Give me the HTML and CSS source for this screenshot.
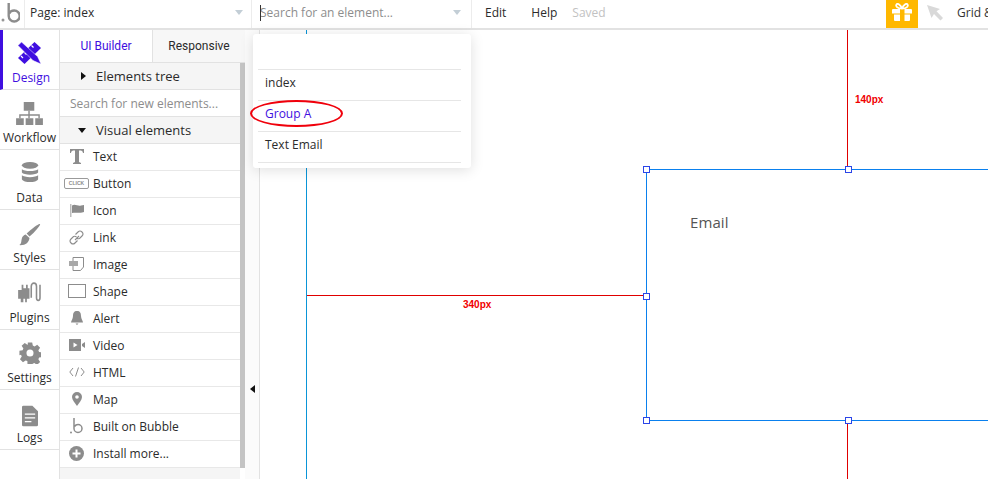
FILE: index.html
```html
<!DOCTYPE html>
<html lang="en">
<head>
<meta charset="utf-8">
<title>Bubble editor</title>
<link rel="stylesheet" href="styles.css">
</head>
<body>
<div class="app">
  <header class="topbar">
    <div class="logo-cell"><svg class="logo-b" width="20" height="24" viewBox="0 0 20 24"><circle cx="3" cy="20" r="1.500" fill="#969696"/><path d="M8.700 3v13a5.500 5.500 0 1 0 5.500-5.500c-2.300 0-4.300 1.200-5 3" fill="none" stroke="#8c8c8c" stroke-width="2.400"/></svg></div>
    <div class="page-cell"><span>Page: index</span><i class="caret"></i></div>
    <div class="search-cell"><span class="cursor"></span><span>Search for an element...</span><i class="caret"></i></div>
    <nav class="menu"><span class="menu-edit">Edit</span><span class="menu-help">Help</span><span class="menu-saved">Saved</span></nav>
    <div class="gift"><svg width="20" height="18" viewBox="0 0 20 18"><path d="M1 6h18a1 1 0 0 1 1 1v3.500H0V7a1 1 0 0 1 1-1zM2 11.500h16V17a1 1 0 0 1-1 1H3a1 1 0 0 1-1-1z" fill="#fff"/><path d="M8 6h4.500v12H8z" fill="#ffb800"/><path d="M10 5.500C8.500 1.500 5.500 0 4.500 1.500S5 5.500 10 5.500zM10 5.500C11.500 1.500 14.500 0 15.500 1.500S15 5.500 10 5.500z" fill="none" stroke="#fff" stroke-width="1.800"/></svg></div>
    <div class="pointer"><svg width="16" height="16" viewBox="0 0 16 16"><path d="M0 0l13 4-3.500 2.200L16 13l-2.500 2.500L7 9l-2.500 4z" fill="#d9d9d9"/></svg></div>
    <div class="grid-label">Grid &amp; Rulers</div>
  </header>
  <div class="main">
    <aside class="nav">
      <div class="nav-item active"><svg class="ni ni-design" width="23" height="22" viewBox="0 0 23 22"><path d="M16.500 0L23 6 6.500 22 0 16z" fill="#3f0fe0"/><path d="M3 14l2 2M6.500 10.500l2 2M13.500 3.500l2 2" stroke="#fff" stroke-width="1.200"/><path d="M3.500 0L0 3.500l15 15 8 3.500-3.500-7.500z" fill="#3f0fe0" stroke="#fff" stroke-width=".5"/></svg><span>Design</span></div>
      <div class="nav-item"><svg class="ni ni-flow" width="27" height="23" viewBox="0 0 28 24"><path d="M8 0h11v9H8zM0 17h8v7H0zM10 17h8v7h-8zM20 17h8v7h-8z" fill="#8c8c8c"/><path d="M13.500 9v8M4 17v-3.500h20V17" fill="none" stroke="#8c8c8c" stroke-width="1.500"/></svg><span>Workflow</span></div>
      <div class="nav-item"><svg class="ni ni-data" width="18" height="21" viewBox="0 0 18 22"><ellipse cx="9" cy="3.500" rx="8.500" ry="3.500" fill="#8c8c8c"/><path d="M.5 7.500c2 2.500 15 2.500 17 0V11c-2 3-15 3-17 0zM.5 14c2 2.500 15 2.500 17 0v4c-2 4-15 4-17 0z" fill="#8c8c8c"/></svg><span>Data</span></div>
      <div class="nav-item"><svg class="ni ni-styles" width="23" height="23" viewBox="0 0 24 24"><path d="M23 0c.8 1-5 8-11 13l-3-3C15 4 22-.5 23 0z" fill="#8c8c8c"/><path d="M8 11l4 3.500C11.500 19 8 22.500 1 22c3-1.500 2-3.500 3-7 .5-2 2-3.500 4-4z" fill="#8c8c8c"/></svg><span>Styles</span></div>
      <div class="nav-item"><svg class="ni ni-plugins" width="25" height="21" viewBox="0 0 26 24"><path d="M4 3h2v4h3V3h2v4h2v12h-3v4H8v-4H6v4H3v-4H0V9h4z" fill="#8c8c8c"/><path d="M15 18V5c0-5 6-5 6 0v13c0 4 4 4 4 0V3" fill="none" stroke="#8c8c8c" stroke-width="1.800"/></svg><span>Plugins</span></div>
      <div class="nav-item"><svg class="ni ni-settings" width="22" height="22" viewBox="0 0 24 24"><path fill-rule="evenodd" fill="#8c8c8c" d="M9.500 0h5l.7 3.600 2 .9 3-2 3.300 3.400-2 3 .8 2 3.700.6v5l-3.700.7-.8 2 2 3-3.500 3.300-3-2-2 .8-.7 3.700h-5L9 21.200l-2-.8-3 2L.6 19l2-3-.8-2L0 14.500v-5l3.600-.7.9-2-2-3L6 .6l3 2 .5-.2zM12 8a4 4 0 1 0 0 8 4 4 0 0 0 0-8z" transform="translate(12 12) scale(.96) translate(-12 -12)"/></svg><span>Settings</span></div>
      <div class="nav-item"><svg class="ni ni-logs" width="16" height="22" viewBox="0 0 17 22"><path d="M1.500 0H11l6 6v14.500a1.500 1.500 0 0 1-1.500 1.500h-14A1.500 1.500 0 0 1 0 20.500v-19A1.500 1.500 0 0 1 1.500 0z" fill="#8c8c8c"/><path d="M3 9h11M3 13h11M3 17h7" stroke="#fff" stroke-width="1.300"/></svg><span>Logs</span></div>
    </aside>
    <section class="panel">
      <div class="tabs"><div class="tab tab-on">UI Builder</div><div class="tab tab-off">Responsive</div></div>
      <div class="panel-body">
        <div class="list">
          <div class="section"><i class="tri-right"></i><span>Elements tree</span></div>
          <div class="search-new">Search for new elements...</div>
          <div class="section"><i class="tri-down"></i><span>Visual elements</span></div>
          <div class="row"><span class="ic"><svg width="14" height="15" viewBox="0 0 14 15"><path d="M0 0h14v4h-1C12.500 2 12 1.500 9 1.500V13l2 1v1H3v-1l2-1V1.500C2 1.500 1.500 2 1 4H0z" fill="#8c8c8c"/></svg></span><span>Text</span></div>
          <div class="row"><span class="ic"><span class="click-btn">CLICK</span></span><span>Button</span></div>
          <div class="row"><span class="ic"><svg width="14" height="13" viewBox="0 0 14 13"><path d="M0 0h1.500v13H0z" fill="#bdbdbd"/><path d="M2 1.500c3-2 6 1 9 0l3-.5v7c-3 1.500-8 0-12 1z" fill="#8c8c8c"/></svg></span><span>Icon</span></div>
          <div class="row"><span class="ic"><svg width="15" height="15" viewBox="0 0 15 15" fill="none" stroke="#8c8c8c" stroke-width="1.100"><path d="M6 10l4-4"/><path d="M6.500 4.500L9 2a2.800 2.800 0 0 1 4 4l-2.500 2.500a2.800 2.800 0 0 1-3-.5"/><path d="M8.500 10.500L6 13a2.800 2.800 0 0 1-4-4l2.500-2.500a2.800 2.800 0 0 1 3 .5"/></svg></span><span>Link</span></div>
          <div class="row"><span class="ic"><svg width="15" height="14" viewBox="0 0 15 14"><path d="M4 .5h10.500V10l-3 3.500H4z" fill="#fff" stroke="#8c8c8c"/><path d="M0 4h9v5H0z" fill="#a8a8a8"/></svg></span><span>Image</span></div>
          <div class="row"><span class="ic"><span class="shape"></span></span><span>Shape</span></div>
          <div class="row"><span class="ic"><svg width="12" height="14" viewBox="0 0 12 14"><path d="M6 0c3 0 4 2 4 5 0 3 2 5 2 6.500H0C0 10 2 8 2 5c0-3 1-5 4-5zM4.500 12.500h3L6 14z" fill="#8c8c8c"/></svg></span><span>Alert</span></div>
          <div class="row"><span class="ic"><svg width="16" height="12" viewBox="0 0 16 12"><path d="M0 0h12v12H0zM13 5l3-2v6l-3-2z" fill="#8c8c8c"/><path d="M4.500 3.500l4 2.500-4 2.500z" fill="#fff"/></svg></span><span>Video</span></div>
          <div class="row"><span class="ic"><svg width="16" height="10" viewBox="0 0 16 10" fill="none" stroke="#8c8c8c"><path d="M4 1L.8 5 4 9M12 1l3.200 4L12 9M9.500 .5l-3 9"/></svg></span><span>HTML</span></div>
          <div class="row"><span class="ic"><svg width="10" height="14" viewBox="0 0 10 14"><path fill-rule="evenodd" d="M5 0a5 5 0 0 1 5 5c0 3-3 6-5 9-2-3-5-6-5-9a5 5 0 0 1 5-5zm0 3.200a1.800 1.800 0 1 0 0 3.600 1.800 1.800 0 0 0 0-3.600z" fill="#8c8c8c"/></svg></span><span>Map</span></div>
          <div class="row"><span class="ic"><svg width="14" height="16" viewBox="0 0 14 16"><circle cx="1" cy="14.500" r="1" fill="#8c8c8c"/><path d="M4 0v10.500a4 4 0 1 0 4-4c-1.500 0-2.800.8-3.500 2" fill="none" stroke="#8c8c8c" stroke-width="1.500"/></svg></span><span>Built on Bubble</span></div>
          <div class="row"><span class="ic"><svg width="15" height="15" viewBox="0 0 15 15"><circle cx="7.500" cy="7.500" r="7.500" fill="#8c8c8c"/><path d="M7.500 3.500v8M3.500 7.500h8" stroke="#fff" stroke-width="2"/></svg></span><span>Install more...</span></div>
          <div class="section section-last"><i class="tri-down"></i><span>Containers</span></div>
        </div>
        <div class="scrollbar"></div>
      </div>
    </section>
    <div class="collapse"><i class="tri-left"></i></div>
    <main class="canvas">
      <div class="guide guide-left"></div>
      <div class="measure-v measure-top"></div>
      <div class="measure-label label-140">140px</div>
      <div class="measure-h"></div>
      <div class="measure-label label-340">340px</div>
      <div class="measure-v measure-bottom"></div>
      <div class="group-box"></div>
      <div class="element-text">Email</div>
      <i class="handle h-tl"></i><i class="handle h-tm"></i><i class="handle h-ml"></i><i class="handle h-bl"></i><i class="handle h-bm"></i>
    </main>
  </div>
  <div class="dropdown">
    <div class="dd-row dd-empty"></div>
    <div class="dd-row">index</div>
    <div class="dd-row dd-on">Group A</div>
    <div class="dd-row">Text Email</div>
  </div>
  <div class="annotation"></div>
</div>
</body>
</html>
```

FILE: styles.css
```css
* { box-sizing: border-box; }
html, body { margin: 0; height: 100%; overflow: hidden; }
body { background: #fff; font-family: "Open Sans", sans-serif; font-size: 12px; color: #2b2b2b; }
.app { position: relative; width: 988px; height: 479px; overflow: hidden; display: flex; flex-direction: column; }
i { display: block; }

.topbar { height: 30px; flex: none; display: flex; border-bottom: 2px solid #e2e2e2; background: #fff; }
.logo-cell { width: 25px; height: 28px; border-right: 1px solid #ececec; flex: none; }
.logo-b { display: block; }
.page-cell { width: 227px; flex: none; display: flex; align-items: center; justify-content: space-between; padding: 0 8px 3px 5px; border-right: 1px solid #ececec; height: 28px; }
.search-cell { position: relative; width: 220px; flex: none; display: flex; align-items: center; padding: 0 10px 3px 8px; border-right: 1px solid #ececec; height: 28px; color: #8d8d8d; justify-content: space-between; }
.cursor { position: absolute; left: 8px; top: 5px; width: 1px; height: 16px; background: #333; }
.caret { width: 0; height: 0; border-left: 4px solid transparent; border-right: 4px solid transparent; border-top: 5px solid #c3ced6; }
.menu { display: flex; align-items: center; width: 414px; height: 28px; flex: none; padding-bottom: 3px; }
.menu-edit { margin-left: 13px; }
.menu-help { margin-left: 25px; }
.menu-saved { margin-left: 15px; color: #c2c2c2; }
.gift { width: 32px; height: 28px; flex: none; background: #ffb800; display: flex; justify-content: center; padding-top: 3px; }
.pointer { width: 39px; flex: none; display: flex; padding: 5px 0 0 9px; height: 28px; }
.grid-label { white-space: nowrap; line-height: 26px; color: #333; }

.main { flex: 1; display: flex; min-height: 0; }
.nav { width: 60px; flex: none; border-right: 1px solid #e2e2e2; display: flex; flex-direction: column; }
.nav-item { height: 60px; flex: none; display: flex; flex-direction: column; align-items: center; justify-content: flex-end; border-bottom: 1px solid #e2e2e2; padding-bottom: 3px; color: #2b2b2b; }
.nav-item span { line-height: 16px; }
.ni { flex: none; }
.ni-design { margin: 0 3px 6px 0; }
.ni-flow { margin-bottom: 5px; }
.ni-data { margin-bottom: 7px; }
.ni-styles { margin-bottom: 3px; }
.ni-plugins { margin-bottom: 7px; }
.ni-settings { margin-bottom: 6px; }
.ni-logs { margin-bottom: 3px; }
.active { border-left: 3px solid #3f0fe0; color: #3f0fe0; background: #fff; }

.panel { width: 185px; flex: none; display: flex; flex-direction: column; }
.tabs { display: flex; height: 32px; flex: none; }
.tab { flex: 1; display: flex; align-items: center; justify-content: center; font-family: "Roboto", sans-serif; font-size: 12px; }
.tab-on { color: #3f0fe0; background: #fff; border-right: 1px solid #e2e2e2; }
.tab-off { background: #f7f7f7; }
.panel-body { flex: 1; min-height: 0; display: flex; border-top: 1px solid #e2e2e2; overflow: hidden; }
.list { width: 180px; flex: none; }
.section { height: 27px; display: flex; align-items: center; gap: 10px; padding-left: 21px; background: #f5f5f5; border-bottom: 1px solid #e2e2e2; font-size: 13px; }
.section:has(.tri-down) { padding-left: 18px; }
.tri-right { width: 0; height: 0; border-top: 4px solid transparent; border-bottom: 4px solid transparent; border-left: 5px solid #111; }
.tri-down { width: 0; height: 0; border-left: 4px solid transparent; border-right: 4px solid transparent; border-top: 5px solid #111; }
.tri-left { width: 0; height: 0; border-top: 4px solid transparent; border-bottom: 4px solid transparent; border-right: 5px solid #111; }
.search-new { height: 27px; padding-left: 10px; line-height: 27px; color: #8d8d8d; border-bottom: 1px solid #e2e2e2; background: #fff; }
.row { height: 27px; display: flex; align-items: center; border-bottom: 1px solid #e8e8e8; background: #fff; padding-bottom: 2px; }
.ic { width: 33px; flex: none; display: flex; align-items: center; justify-content: center; }
.click-btn { width: 25px; height: 11px; border: 1px solid #9a9a9a; border-radius: 2px; font: bold 5px/9px "Liberation Sans", sans-serif; color: #8c8c8c; text-align: center; }
.shape { width: 18px; height: 14px; border: 1px solid #8c8c8c; }
.section-last { padding-top: 8px; }
.scrollbar { width: 5px; flex: none; height: 405px; background: #c4c4c4; }

.collapse { width: 15px; flex: none; background: #fbfbfb; border-right: 1px solid #e2e2e2; display: flex; align-items: flex-end; justify-content: center; padding-bottom: 86px; }

.canvas { position: relative; flex: 1; background: #fff; overflow: hidden; }
.guide { position: absolute; background: #0a95d8; }
.guide-left { left: 46px; top: 0; width: 1px; height: 449px; }
.measure-v { position: absolute; left: 587px; width: 1px; background: #e00000; }
.measure-top { top: 0; height: 139px; }
.measure-bottom { top: 391px; height: 60px; }
.measure-h { position: absolute; left: 47px; top: 265px; width: 339px; height: 1px; background: #e00000; }
.measure-label { position: absolute; font: bold 10px/12px "Liberation Sans", sans-serif; color: #f00000; }
.label-140 { left: 595px; top: 64px; }
.label-340 { left: 203px; top: 269px; }
.group-box { position: absolute; left: 386px; top: 139px; width: 342px; height: 252px; border: 1px solid #0a80ee; border-right: 0; }
.element-text { position: absolute; left: 430px; top: 182px; font-size: 15px; line-height: 20px; color: #555; letter-spacing: .1px; }
.handle { position: absolute; width: 7px; height: 7px; background: #fff; border: 1px solid #2b45e8; }
.h-tl { left: 383px; top: 136px; }
.h-tm { left: 585px; top: 136px; }
.h-ml { left: 383px; top: 263px; }
.h-bl { left: 383px; top: 387px; }
.h-bm { left: 585px; top: 387px; }

.dropdown { position: absolute; left: 253px; top: 34px; width: 218px; height: 134px; background: #fff; border-radius: 3px; padding: 0 10px 0 5px; box-shadow: 0 2px 14px rgba(0,0,0,.13); }
.dd-row { height: 31px; line-height: 25px; padding-left: 7px; border-bottom: 1px solid #e6e6e6; color: #2b2b2b; }
.dd-empty { height: 36px; }
.dd-on { color: #3f0fe0; }
.annotation { position: absolute; left: 250px; top: 100px; width: 93px; height: 27px; border: 2px solid #f0000b; border-radius: 50%; }
```
